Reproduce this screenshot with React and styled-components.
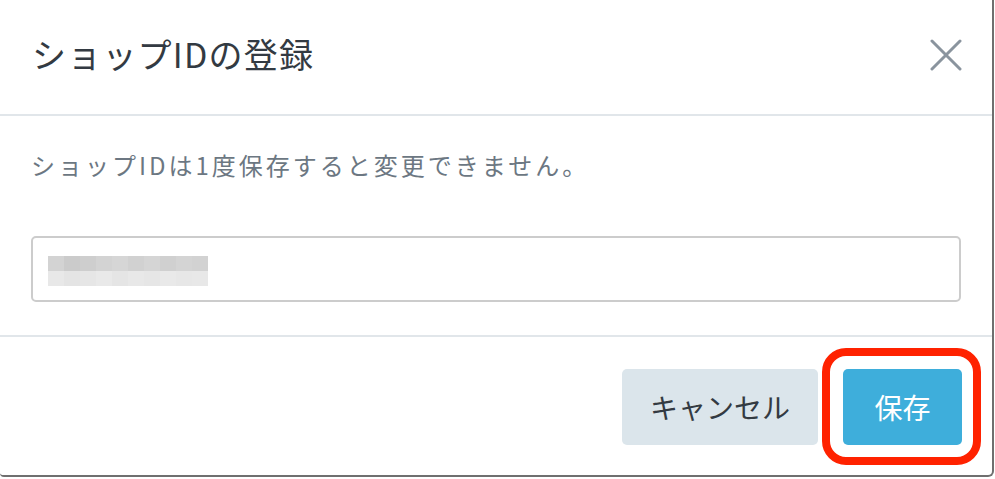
import styled, { createGlobalStyle } from "styled-components";

const GlobalStyle = createGlobalStyle`
  html, body {
    margin: 0;
    padding: 0;
    background: #ffffff;
  }
  body {
    font-family: "Noto Sans CJK JP", "Noto Sans", sans-serif;
  }
`;

const Modal = styled.div`
  width: 992px;
  height: 475px;
  background: #ffffff;
  border-right: 2px solid #6f6f6f;
  border-bottom: 2px solid #6f6f6f;
  border-bottom-right-radius: 6px;
  border-bottom-left-radius: 4px;
  display: flex;
  flex-direction: column;
`;

const Header = styled.div`
  height: 116px;
  border-bottom: 2px solid #e1e6ea;
  display: flex;
  align-items: center;
  justify-content: space-between;
  padding: 0 30px 0 32px;
  box-sizing: border-box;
  flex-shrink: 0;
`;

const Title = styled.h2`
  margin: 0;
  font-size: 34px;
  font-weight: 400;
  color: #333a42;
  letter-spacing: 1.2px;
  margin-top: -7px;
`;

const CloseButton = styled.button`
  border: none;
  background: none;
  padding: 0;
  width: 32px;
  height: 32px;
  display: flex;
  align-items: center;
  justify-content: center;
  cursor: pointer;
  margin-top: -4px;
`;

const Body = styled.div`
  height: 221px;
  border-bottom: 2px solid #e1e6ea;
  padding: 0 31px;
  box-sizing: border-box;
  flex-shrink: 0;
`;

const Notice = styled.p`
  margin: 0;
  padding-top: 31px;
  font-size: 24px;
  line-height: 36px;
  color: #6c7782;
  letter-spacing: 3px;
`;

const Field = styled.div`
  margin-top: 53px;
  height: 66px;
  border: 2px solid #cccccc;
  border-radius: 5px;
  box-sizing: border-box;
  padding: 18px 0 0 15px;
`;

const Blur = styled.div`
  display: grid;
  grid-template-columns: repeat(10, 16px);
  grid-auto-rows: 15px;
`;

const BlurCell = styled.div`
  background: ${(p) => p.$shade};
`;

const Footer = styled.div`
  flex: 1;
  display: flex;
  justify-content: flex-end;
  align-items: flex-start;
  gap: 25px;
  padding: 32px 30px 0 0;
  box-sizing: border-box;
`;

const Button = styled.button`
  height: 76px;
  border: none;
  border-radius: 5px;
  font-family: "Noto Sans CJK JP", "Noto Sans", sans-serif;
  font-size: 28px;
  padding: 0;
  cursor: pointer;
  width: ${(p) => p.$width}px;
  background: ${(p) => (p.$primary ? "#3eaedb" : "#dbe5eb")};
  color: ${(p) => (p.$primary ? "#ffffff" : "#333a42")};
`;

const Marked = styled.div`
  position: relative;
`;

const Highlight = styled.div`
  position: absolute;
  top: -21px;
  left: -21px;
  right: -19px;
  bottom: -20px;
  border: 8px solid #ff2200;
  border-radius: 24px;
  pointer-events: none;
`;

const topRow = ["#d3d3d3", "#cbcbcb", "#cecece", "#d3d3d3", "#d6d6d6", "#d1d1d1", "#d5d5d5", "#d0d0d0", "#d4d4d4", "#d2d2d2"];
const bottomRow = ["#e8e8e8", "#e4e4e4", "#e6e6e6", "#e9e9e9", "#e5e5e5", "#e8e8e8", "#e6e6e6", "#e9e9e9", "#e7e7e7", "#e8e8e8"];

export default function App() {
  return (
    <>
      <GlobalStyle />
      <Modal>
        <Header>
          <Title>ショップIDの登録</Title>
          <CloseButton aria-label="閉じる">
            <svg width="32" height="32" viewBox="0 0 32 32">
              <path d="M2 2 L30 30 M30 2 L2 30" stroke="#8a949e" strokeWidth="3" strokeLinecap="round" />
            </svg>
          </CloseButton>
        </Header>
        <Body>
          <Notice>ショップIDは1度保存すると変更できません。</Notice>
          <Field>
            <Blur>
              {[...topRow, ...bottomRow].map((c, i) => (
                <BlurCell key={i} $shade={c} />
              ))}
            </Blur>
          </Field>
        </Body>
        <Footer>
          <Button $width={196}>キャンセル</Button>
          <Marked>
            <Button $primary $width={119}>保存</Button>
            <Highlight />
          </Marked>
        </Footer>
      </Modal>
    </>
  );
}
